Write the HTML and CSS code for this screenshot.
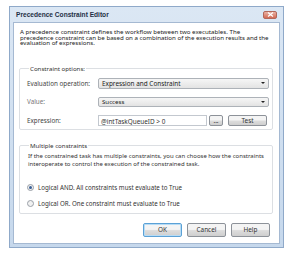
FILE: index.html
```html
<!DOCTYPE html>
<html lang="en">
<head>
<meta charset="UTF-8" />
<title>Precedence Constraint Editor</title>
<link rel="stylesheet" href="styles.css">
</head>
<body>

<div class="window">
  <div class="titlebar">
    <span class="title">Precedence Constraint Editor</span>
    <span class="close">
      <svg width="7" height="5" viewBox="0 0 7 5"><path d="M1 0.5 L6 4.5 M6 0.5 L1 4.5" stroke="#fff" stroke-width="1.2"/></svg>
    </span>
  </div>

  <div class="client">
    <p class="intro">A precedence constraint defines the workflow between two executables. The precedence constraint can be based on a combination of the execution results and the evaluation of expressions.</p>

    <fieldset class="group options">
      <legend>Constraint options:</legend>
      <div class="row">
        <label>Evaluation operation:</label>
        <div class="select main"><span>Expression and Constraint</span><i class="arrow"></i></div>
      </div>
      <div class="row">
        <label class="dim">Value:</label>
        <div class="select"><span>Success</span><i class="arrow"></i></div>
      </div>
      <div class="row">
        <label>Expression:</label>
        <div class="input">@intTaskQueueID &gt; 0</div>
        <div class="btn small">...</div>
        <div class="btn test">Test</div>
      </div>
    </fieldset>

    <fieldset class="group multi">
      <legend>Multiple constraints</legend>
      <p class="note">If the constrained task has multiple constraints, you can choose how the constraints interoperate to control the execution of the constrained task.</p>
      <div class="radios">
        <div class="radio"><i class="dot on"></i>Logical AND. All constraints must evaluate to True</div>
        <div class="radio"><i class="dot"></i>Logical OR. One constraint must evaluate to True</div>
      </div>
    </fieldset>

    <div class="buttons">
      <div class="btn default">OK</div>
      <div class="btn">Cancel</div>
      <div class="btn">Help</div>
    </div>
  </div>
</div>

</body>
</html>
```

FILE: styles.css
```css
body {
  margin: 0;
  background: #fff;
  font-family: "Noto Sans", "Open Sans", sans-serif;
  font-size: 6.15px;
  color: #222;
}
.window {
  margin: 6px 0 0 9px;
  width: 275px;
  height: 242px;
  box-sizing: border-box;
  border: 1px solid #8fa9c9;
  background: linear-gradient(#dbe7f4, #c6d8ec);
  padding: 0 3px 3px 3px;
  display: flex;
  flex-direction: column;
}
.titlebar {
  height: 15px;
  display: flex;
  align-items: center;
  justify-content: space-between;
  padding: 0 3px 0 3px;
}
.title {
  font-family: "Liberation Sans", sans-serif;
  font-weight: bold;
  font-size: 6.6px;
  color: #1e2f45;
}
.close {
  width: 12px;
  height: 6px;
  border-radius: 2px;
  border: 1px solid #b2675a;
  background: linear-gradient(#eab2a4, #d26a55);
  display: flex;
  align-items: center;
  justify-content: center;
}
.client {
  flex: 1;
  background: #fff;
  border: 1px solid #a5b9d2;
  padding: 5px 6px 0 5px;
  display: flex;
  flex-direction: column;
}
.intro {
  margin: 1px 0 0 1px;
  line-height: 5.5px;
  width: 250px;
}
.group {
  border: 1px solid #dcdfe3;
  border-radius: 2px;
  margin: 0;
  padding: 0 3px 0 7px;
}
.group legend {
  padding: 0 1px;
  margin-left: 2px;
  color: #333;
}
.options {
  margin-top: 18px;
  height: 66px;
  box-sizing: border-box;
}
.row {
  display: flex;
  align-items: center;
  margin-top: 5px;
}
.row + .row {
  margin-top: 8px;
}
.row label {
  width: 71px;
  font-size: 6.3px;
  color: #444;
}
.row label.dim {
  color: #777;
}
.select {
  flex: 1;
  height: 10px;
  box-sizing: border-box;
  border: 1px solid #adb2b8;
  border-radius: 2px;
  background: linear-gradient(#f6f6f6, #e3e3e3);
  display: flex;
  align-items: center;
  justify-content: space-between;
  padding: 0 3px;
}
.select.main {
  height: 11px;
  font-size: 6.4px;
  color: #222;
}
.arrow {
  width: 0;
  height: 0;
  border-left: 2px solid transparent;
  border-right: 2px solid transparent;
  border-top: 2px solid #222;
}
.input {
  width: 109px;
  height: 11px;
  box-sizing: border-box;
  border: 1px solid #c3c8cf;
  padding: 1px 2px 0;
  font-size: 6.4px;
  color: #333;
}
.btn {
  height: 14px;
  width: 39px;
  box-sizing: border-box;
  border: 1px solid #8d9299;
  border-radius: 2px;
  background: linear-gradient(#f4f4f4 45%, #dcdcdc 55%, #cfcfcf);
  display: flex;
  align-items: center;
  justify-content: center;
  font-size: 6.4px;
  color: #333;
}
.btn.small {
  width: 14px;
  height: 11px;
  margin-left: 2px;
}
.btn.test {
  width: 39px;
  height: 11px;
  margin-left: 5px;
}
.multi {
  margin-top: 11px;
  height: 73px;
  box-sizing: border-box;
}
.note {
  margin: 2px 0 0 1px;
  line-height: 8px;
  font-size: 6px;
  color: #333;
}
.radios {
  margin-top: 15px;
}
.radio {
  display: flex;
  align-items: center;
  height: 10px;
  margin-bottom: 6px;
  font-size: 6.2px;
  color: #333;
}
.dot {
  width: 5px;
  height: 5px;
  border-radius: 50%;
  border: 1px solid #9aa0a8;
  background: #f1f1f1;
  margin-right: 4px;
  position: relative;
}
.dot.on::after {
  content: "";
  position: absolute;
  left: 1px;
  top: 1px;
  width: 3px;
  height: 3px;
  border-radius: 50%;
  background: #3a5f96;
}
.buttons {
  display: flex;
  justify-content: flex-end;
  gap: 5px;
  margin-top: 9px;
  padding-right: 3px;
}
.btn.default {
  border-color: #5ba1d6;
  box-shadow: inset 0 0 0 1px #b7dcf5;
}
```
